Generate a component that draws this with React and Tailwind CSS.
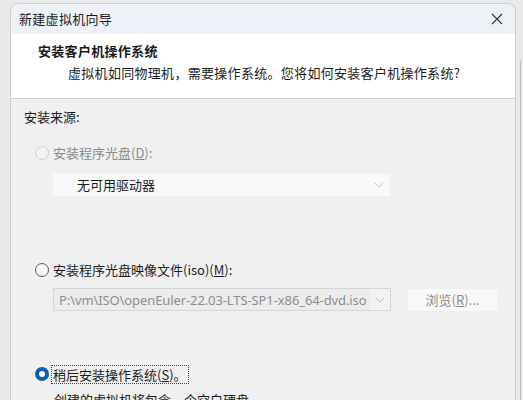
import React from "react";

const font = { fontFamily: '"Noto Sans CJK SC", "Noto Sans", sans-serif' };

function Radio({ state }) {
  if (state === "checked") {
    return (
      <span className="w-[14px] h-[14px] rounded-full bg-[#0a5fb4] flex items-center justify-center shrink-0">
        <span className="w-[6px] h-[6px] rounded-full bg-white" />
      </span>
    );
  }
  if (state === "disabled") {
    return <span className="w-[14px] h-[14px] rounded-full border border-[#cfcfcf] bg-[#f3f3f3] shrink-0" />;
  }
  return <span className="w-[14px] h-[14px] rounded-full border border-[#5a5a5a] bg-[#f5f5f5] shrink-0" />;
}

function Chevron({ color = "#b8b8b8" }) {
  return (
    <svg width="10" height="6" viewBox="0 0 10 6" fill="none">
      <path d="M1 1l4 4 4-4" stroke={color} strokeWidth="1" />
    </svg>
  );
}

export default function App() {
  return (
    <div className="w-[523px] h-[400px] bg-[#e9e9e9] overflow-hidden flex text-[13px] leading-[18px] text-[#1b1b1b]" style={font}>
      <div className="w-[10px] shrink-0" />
      <div className="w-[506px] mt-[3px] shrink-0 flex flex-col rounded-t-[8px] border border-[#cdcdcd] border-b-0 overflow-hidden bg-[#f0f0f0]">
        {/* title bar */}
        <div className="h-[30px] bg-[#eef1f7] flex items-center justify-between pl-[8px] pr-[12px] shrink-0">
          <span className="text-[13px] tracking-[0.3px]">新建虚拟机向导</span>
          <svg width="12" height="12" viewBox="0 0 12 12" fill="none">
            <path d="M1 1l10 10M11 1L1 11" stroke="#333" strokeWidth="1.1" />
          </svg>
        </div>
        {/* header */}
        <div className="h-[65px] bg-white border-b border-[#cfcfcf] shrink-0 flex flex-col pl-[27px] pt-[8px] tracking-[0.3px]">
          <span className="font-bold text-[13px] leading-[18px]">安装客户机操作系统</span>
          <span className="pl-[30px] mt-[4px] text-[13px] leading-[18px]">虚拟机如同物理机，需要操作系统。您将如何安装客户机操作系统?</span>
        </div>
        {/* body */}
        <div className="flex flex-col pl-[13px] pt-[9px]">
          <span className="h-[18px]">安装来源:</span>
          <div className="mt-[18px] h-[18px] flex items-center pl-[11px] gap-[4px] text-[#8a8a8a]">
            <Radio state="disabled" />
            <span>安装程序光盘(<span className="underline">D</span>):</span>
          </div>
          <div className="mt-[12px] ml-[29px] w-[337px] h-[22px] bg-[#f9f9f9] flex items-center justify-between pl-[24px] pr-[6px]">
            <span className="text-[#1b1b1b]">无可用驱动器</span>
            <Chevron color="#c4c4c4" />
          </div>
          <div className="mt-[65px] h-[18px] flex items-center pl-[11px] gap-[4px]">
            <Radio state="normal" />
            <span>安装程序光盘映像文件(iso)(<span className="underline">M</span>):</span>
          </div>
          <div className="mt-[9px] flex items-center ml-[29px]">
            <div className="w-[338px] h-[23px] border border-[#d6d6d6] bg-[#f2f2f2] flex items-center">
              <span className="flex-1 h-full bg-[#ececec] flex items-center pl-[5px] text-[#8c8c8c] text-[13px] tracking-[-0.1px]" style={{ fontFamily: '"Segoe UI", "Noto Sans", "Noto Sans CJK SC", sans-serif' }}>P:\vm\ISO\openEuler-22.03-LTS-SP1-x86_64-dvd.iso</span>
              <span className="w-[20px] flex items-center justify-center">
                <Chevron color="#c0c0c0" />
              </span>
            </div>
            <div className="ml-[17px] w-[89px] h-[22px] bg-[#f8f8f8] flex items-center justify-center text-[#8c8c8c]">
              浏览(<span className="underline">R</span>)...
            </div>
          </div>
          <div className="mt-[53px] h-[20px] flex items-center pl-[11px] gap-[2px]">
            <Radio state="checked" />
            <span className="border border-dotted border-[#444] px-[1px] h-[19px] leading-[17px]">稍后安装操作系统(<span className="underline">S</span>)。</span>
          </div>
          <div className="mt-[7px] pl-[30px] h-[18px]">创建的虚拟机将包含一个空白硬盘。</div>
        </div>
      </div>
      <div className="w-[7px] shrink-0 flex">
        <div className="w-[4px]" />
        <div className="w-[1px] mt-[60px] bg-[#bdbdbd]" />
      </div>
    </div>
  );
}
